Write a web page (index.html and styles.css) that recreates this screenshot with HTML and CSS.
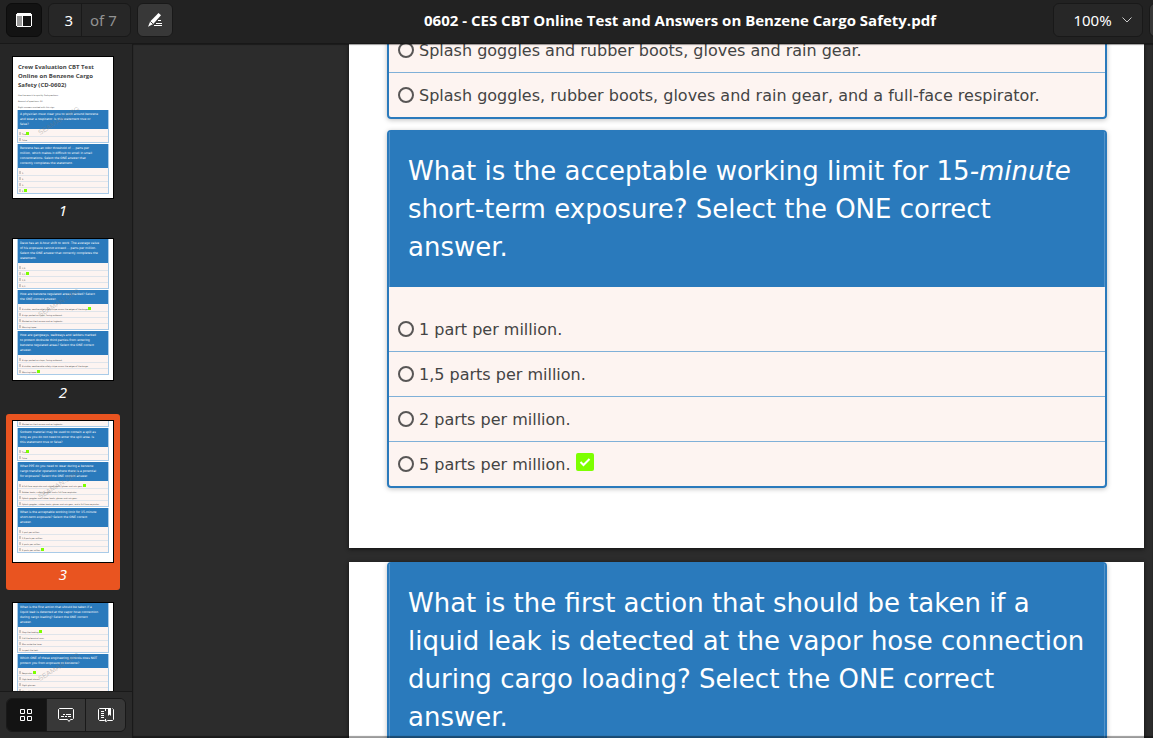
FILE: index.html
```
<!DOCTYPE html>
<html lang="en">
<head>
    <meta charset="UTF-8">
    <meta name="viewport" content="width=device-width, initial-scale=1.0">
    <title>0602 - CES CBT Online Test and Answers on Benzene Cargo Safety.pdf</title>
    <link rel="stylesheet" href="styles.css">
</head>
<body>

    <!-- Toolbar -->
    <header class="toolbar">
        <button type="button" class="tool-button active" aria-label="Side pane">
            <svg width="16" height="16" viewBox="0 0 16 16"><path d="M1 1h14v1h1v12h-1v1H1v-1H0V2h1z" fill="#fff"/><path d="M1 4h5v10H1z" fill="#999"/><path d="M7 4h8v10H7z" fill="#131313"/></svg>
        </button>
        <div class="page-select">
            <input type="text" class="page-input" value="3" aria-label="Page">
            <span class="page-total">of 7</span>
        </div>
        <button type="button" class="tool-button annotate" aria-label="Annotate">
            <svg width="16" height="16" viewBox="0 0 16 16"><path d="M11.5 1 14 3.2 6.2 12 1 14.8l2.2-5.4z" fill="#fff"/><path d="m3.2 9.4 3 2.6" stroke="#383838"/><path d="M11 8.5h3M9 11.5h6M7 13.5h8" stroke="#fff"/></svg>
        </button>
        <h1 class="title">0602 - CES CBT Online Test and Answers on Benzene Cargo Safety.pdf</h1>
        <button type="button" class="zoom-button">100%
            <svg width="12" height="8" viewBox="0 0 12 8"><path d="m1.500 1.500 4.500 4.500 4.500-4.500" fill="none" stroke="#ccc"/></svg>
        </button>
        <button type="button" class="tool-button overflow" aria-label="Menu"></button>
    </header>

    <div class="viewer">
        <!-- Sidebar with thumbnails -->
        <aside class="sidebar">
            <div class="thumbs">
                <a href="#page1" class="thumb">
                    <div class="mini">
                        <div class="mini-title">Crew Evaluation CBT Test<br>Online on Benzene Cargo<br>Safety (CD-0602)</div>
                        <div class="mini-note">Use the search to quickly find questions.</div>
                        <div class="mini-note">Amount of questions: 30.</div>
                        <div class="mini-note">Right answers marked with this sign.</div>
                        <div class="mini-card">
                            <div class="mini-head">A physician must clear you to work around benzene<br>and wear a respirator. Is this statement true or<br>false?</div>
                            <ul class="mini-list"><li class="right">True</li><li>False</li></ul>
                        </div>
                        <div class="mini-card">
                            <div class="mini-head">Benzene has an odor threshold of ... parts per<br>million, which makes it difficult to smell in small<br>concentrations. Select the ONE answer that<br>correctly completes the statement.</div>
                            <ul class="mini-list"><li>1.</li><li>2.</li><li>3.</li><li class="right">5.</li></ul>
                        </div>
                        <span class="watermark">SEAMAN.ORG</span>
                    </div>
                    <span class="thumb-label">1</span>
                </a>
                <a href="#page2" class="thumb">
                    <div class="mini">
                        <div class="mini-card">
                            <div class="mini-head">Dave has an 8-hour shift to work. The average value<br>of his exposure cannot exceed ... parts per million.<br>Select the ONE answer that correctly completes the<br>statement.</div>
                            <ul class="mini-list"><li>0,5.</li><li class="right">1,0.</li><li>1,5.</li><li>2,0.</li></ul>
                        </div>
                        <div class="mini-card">
                            <div class="mini-head">How are benzene regulated areas marked? Select<br>the ONE correct answer.</div>
                            <ul class="mini-list"><li class="right">A visible, weatherable safety stripe across the edges of the barge.</li><li>A sign posted on stops, facing outboard.</li><li>Marked on the transom and on tugboats.</li><li>Warning tapes.</li></ul>
                        </div>
                        <div class="mini-card">
                            <div class="mini-head">How are gangways, walkways and ladders marked<br>to protect dockside third parties from entering<br>benzene regulated areas? Select the ONE correct<br>answer.</div>
                            <ul class="mini-list"><li>A sign posted on stops, facing outboard.</li><li>A visible, weatherable safety stripe across the edges of the barge.</li><li class="right">Warning tapes.</li></ul>
                        </div>
                        <span class="watermark">SEAMAN.ORG</span>
                    </div>
                    <span class="thumb-label">2</span>
                </a>
                <a href="#page3" class="thumb selected">
                    <div class="mini">
                        <div class="mini-card">
                            <ul class="mini-list rest"><li>Marked on the transom and on tugboats.</li></ul>
                        </div>
                        <div class="mini-card">
                            <div class="mini-head">Sorbent material may be used to contain a spill as<br>long as you do not need to enter the spill area. Is<br>this statement true or false?</div>
                            <ul class="mini-list"><li class="right">True</li><li>False</li></ul>
                        </div>
                        <div class="mini-card">
                            <div class="mini-head">What PPE do you need to wear during a benzene<br>cargo transfer operation where there is a potential<br>for exposure? Select the ONE correct answer.</div>
                            <ul class="mini-list"><li class="right">A full-face respirator and rubber boots, gloves and rain gear.</li><li>Rubber boots, safety goggles and a full-face respirator.</li><li>Splash goggles and rubber boots, gloves and rain gear.</li><li>Splash goggles, rubber boots, gloves and rain gear, and a full-face respirator.</li></ul>
                        </div>
                        <div class="mini-card">
                            <div class="mini-head">What is the acceptable working limit for 15-minute<br>short-term exposure? Select the ONE correct<br>answer.</div>
                            <ul class="mini-list"><li>1 part per million.</li><li>1,5 parts per million.</li><li>2 parts per million.</li><li class="right">5 parts per million.</li></ul>
                        </div>
                        <span class="watermark">SEAMAN.ORG</span>
                    </div>
                    <span class="thumb-label">3</span>
                </a>
                <a href="#page4" class="thumb" aria-label="Page 4">
                    <div class="mini">
                        <div class="mini-card">
                            <div class="mini-head">What is the first action that should be taken if a<br>liquid leak is detected at the vapor hose connection<br>during cargo loading? Select the ONE correct<br>answer.</div>
                            <ul class="mini-list"><li class="right">Stop the loading.</li><li>Call the terminal man.</li><li>Man aside the hose.</li><li>Inspect the leak.</li></ul>
                        </div>
                        <div class="mini-card">
                            <div class="mini-head">Which ONE of these engineering controls does NOT<br>protect you from exposure to benzene?</div>
                            <ul class="mini-list"><li class="right">Respirator.</li><li>High-level alarms.</li><li>Sight glasses.</li><li>Closed loading.</li></ul>
                        </div>
                        <span class="watermark">SEAMAN.ORG</span>
                    </div>
                </a>
            </div>
            <nav class="side-tabs">
                <div class="tab-group">
                    <button type="button" class="tab active" aria-label="Thumbnails">
                        <svg width="16" height="16" viewBox="0 0 16 16" fill="none" stroke="#fff"><path d="M2.500 2.500h4v4h-4zM9.500 2.500h4v4h-4zM2.500 9.500h4v4h-4zM9.500 9.500h4v4h-4z"/></svg>
                    </button>
                    <button type="button" class="tab" aria-label="Annotations">
                        <svg width="16" height="16" viewBox="0 0 16 16" fill="none" stroke="#fff"><path d="M1.500 1.500h13l1 1v9l-1 1h-2l-1.500 2-1.500-2h-8l-1-1v-9z"/><path d="M5 7.500h2M8 7.500h5M3 9.500h3M7 9.500h2M10 9.500h3"/></svg>
                    </button>
                    <button type="button" class="tab" aria-label="Bookmarks">
                        <svg width="16" height="16" viewBox="0 0 16 16" fill="none" stroke="#fff"><path d="M10 1.500h-8.500l-1 1v10l1 1h5l1.500 1 1.500-1h5l1-1v-10l-1-1M7.500 2v2M7.500 12v2M3 4.500h3M3 6.500h3M3 8.500h3M3 10.500h3"/><path d="M10 1h3v8l-1.500-1.500L10 9z" fill="#fff" stroke="none"/></svg>
                    </button>
                </div>
            </nav>
        </aside>

        <!-- Document -->
        <main class="document">
            <section class="page" id="page3">
                <fieldset class="card cut">
                    <div class="options">
                        <label class="option"><input type="radio" name="q1">Splash goggles and rubber boots, gloves and rain gear.</label>
                        <label class="option"><input type="radio" name="q1">Splash goggles, rubber boots, gloves and rain gear, and a full-face respirator.</label>
                    </div>
                </fieldset>
                <fieldset class="card">
                    <h2 class="question">What is the acceptable working limit for 15<em>-minute</em> short-term exposure? Select the ONE correct answer.</h2>
                    <div class="options first">
                        <label class="option"><input type="radio" name="q2">1 part per million.</label>
                        <label class="option"><input type="radio" name="q2">1,5 parts per million.</label>
                        <label class="option"><input type="radio" name="q2">2 parts per million.</label>
                        <label class="option"><input type="radio" name="q2">5 parts per million.
                            <svg class="check" width="18" height="18" viewBox="0 0 18 18"><rect width="18" height="18" rx="2" fill="#7dff00"/><path d="m4.500 9 3 3 6-6" fill="none" stroke="#fff" stroke-width="2"/></svg>
                        </label>
                    </div>
                </fieldset>
            </section>
            <section class="page" id="page4">
                <fieldset class="card">
                    <h2 class="question">What is the first action that should be taken if a liquid leak is detected at the vapor hose connection during cargo loading? Select the ONE correct answer.</h2>
                </fieldset>
            </section>
        </main>
    </div>

</body>
</html>
```

FILE: styles.css
```
* {
    box-sizing: border-box;
}

body {
    margin: 0;
    height: 100vh;
    display: flex;
    flex-direction: column;
    overflow: hidden;
    background-color: #2c2c2c;
    color: #fff;
    font-family: "Noto Sans", "Open Sans", sans-serif;
    font-size: 15px;
}

button,
input {
    font: inherit;
    color: inherit;
}

/* Toolbar */
.toolbar {
    display: flex;
    flex-shrink: 0;
    align-items: flex-start;
    height: 44px;
    padding: 3px 0 0 6px;
    background-color: #222;
    border-bottom: 1px solid #181818;
    overflow: hidden;
}

.tool-button,
.zoom-button,
.page-select {
    display: flex;
    flex-shrink: 0;
    align-items: center;
    justify-content: center;
    height: 34px;
    padding: 0;
    border: 1px solid #191919;
    border-radius: 6px;
    background-color: #272727;
}

.tool-button {
    width: 36px;
    background-color: #383838;
}

.tool-button.active {
    background-color: #131313;
    border-color: #0c0c0c;
}

.page-select {
    width: 83px;
    margin: 0 6px;
}

.page-input {
    width: 33px;
    height: 32px;
    padding: 0 8px 0 0;
    border: 0;
    border-right: 1px solid #191919;
    background: none;
    text-align: right;
}

.page-total {
    flex: 1;
    padding-left: 8px;
    color: #929292;
}

.title {
    flex: 1;
    margin: 0;
    padding-left: 134px;
    line-height: 34px;
    font-family: "Open Sans", sans-serif;
    font-size: 15px;
    text-align: center;
    white-space: nowrap;
}

.zoom-button {
    gap: 9px;
    width: 90px;
    padding-left: 10px;
    margin-right: 6px;
}

.overflow {
    margin-right: -32px;
}

/* Sidebar */
.viewer {
    flex: 1;
    display: flex;
    min-height: 0;
}

.sidebar {
    display: flex;
    flex-direction: column;
    flex-shrink: 0;
    width: 133px;
    background-color: #262626;
    border-right: 1px solid #191919;
}

.thumbs {
    flex: 1;
    display: flex;
    flex-direction: column;
    align-items: flex-start;
    gap: 6px;
    min-height: 0;
    padding: 6px;
    overflow: hidden;
}

.thumb {
    display: flex;
    flex-direction: column;
    flex-shrink: 0;
    align-items: center;
    width: 114px;
    height: 176px;
    padding-top: 6px;
    color: #fff;
    text-decoration: none;
}

.thumb.selected {
    background-color: #e95420;
    border-radius: 3px;
}

.thumb-label {
    line-height: 22px;
    font-size: 15px;
    font-style: italic;
}

/* Miniature pages */
.mini {
    position: relative;
    width: 102px;
    height: 143px;
    padding: 0 4px;
    border: 1px solid #000;
    background-color: #fff;
    color: #444;
    font-family: "DejaVu Sans", sans-serif;
    overflow: hidden;
}

.mini-title {
    padding: 6px 0 2px 1px;
    line-height: 9px;
    font-size: 6px;
    font-weight: bold;
    font-family: "Open Sans", sans-serif;
    white-space: nowrap;
}

.mini-note {
    padding-left: 1px;
    line-height: 6px;
    font-size: 2px;
}

.mini-card {
    margin-bottom: 1px;
    border: solid #a9cbe8;
    border-width: 0 1px 1px;
    background-color: #fdf4f1;
}

.mini-head {
    padding: 2px;
    background-color: #2a7abc;
    color: #fff;
    line-height: 5px;
    font-size: 3px;
    white-space: nowrap;
}

.mini-list {
    margin: 0;
    padding: 2px 0 0;
    list-style: none;
}

.mini-list.rest {
    padding: 0;
}

.mini-list li {
    display: flex;
    align-items: center;
    height: 6px;
    padding-left: 1px;
    border-bottom: 1px solid #dfe4ea;
    font-size: 2px;
    white-space: nowrap;
}

.mini-list li:last-child {
    height: 5px;
    border-bottom: 0;
}

.mini-list li::before {
    content: "";
    width: 2px;
    height: 3px;
    margin-right: 1px;
    background-color: #cfc8c6;
}

.mini-list .right::after {
    content: "";
    width: 3px;
    height: 3px;
    background-color: #7dff00;
}

.watermark {
    position: absolute;
    top: 60px;
    left: 22px;
    color: rgba(120, 120, 120, 0.4);
    font-family: "Liberation Sans", sans-serif;
    font-size: 7px;
    transform: rotate(-32deg);
}

/* Sidebar switcher */
.side-tabs {
    flex-shrink: 0;
    padding: 6px;
    background-color: #2a2a2a;
    border-top: 1px solid #191919;
}

.tab-group {
    display: flex;
    height: 34px;
    border: 1px solid #191919;
    border-radius: 6px;
    overflow: hidden;
}

.tab {
    flex: 1;
    display: flex;
    align-items: center;
    justify-content: center;
    padding: 0;
    border: 0;
    background-color: #383838;
}

.tab + .tab {
    border-left: 1px solid #191919;
}

.tab.active {
    background-color: #131313;
}

/* Document */
.document {
    position: relative;
    flex: 1;
    min-width: 0;
    padding: 0 9px 0 216px;
    overflow: hidden;
    font-family: "DejaVu Sans", sans-serif;
}

/* Shade at the scroll edges */
.document::after {
    content: "";
    position: absolute;
    inset: 0;
    box-shadow: inset 0 1px 1px rgba(0, 0, 0, 0.4), inset 0 -2px 1px rgba(0, 0, 0, 0.4);
    pointer-events: none;
}

.page {
    margin-bottom: 14px;
    padding: 0 37px 60px 38px;
    background-color: #fff;
    box-shadow: 0 1px 4px #111;
    overflow: hidden;
}

.card {
    min-width: 0;
    margin: 0 0 11px;
    padding: 0;
    border: 2px solid #2a7abc;
    border-radius: 4px;
    background-color: #fdf4f1;
    box-shadow: 0 1px 5px rgba(0, 0, 0, 0.25);
}

.card:last-child {
    margin-bottom: 0;
}

/* Card scrolled partly out of view */
.card.cut {
    margin-top: -18px;
}

.question {
    margin: 0;
    padding: 20px 18px 21px;
    border: solid #5594c9;
    border-width: 0 1px;
    background-color: #2a7abc;
    color: #fff;
    font-size: 26px;
    font-weight: normal;
    line-height: 38px;
}

.options.first {
    padding-top: 20px;
}

.option {
    display: flex;
    align-items: center;
    height: 45px;
    padding-left: 9px;
    border-bottom: 1px solid #7fb0d8;
    color: #444;
    font-size: 16px;
}

.option:last-child {
    height: 44px;
    border-bottom: 0;
}

.option input {
    appearance: none;
    width: 16px;
    height: 16px;
    margin: 0 5px 0 0;
    border: 2px solid #585656;
    border-radius: 50%;
}

.check {
    margin: 0 0 4px 5px;
}
```
